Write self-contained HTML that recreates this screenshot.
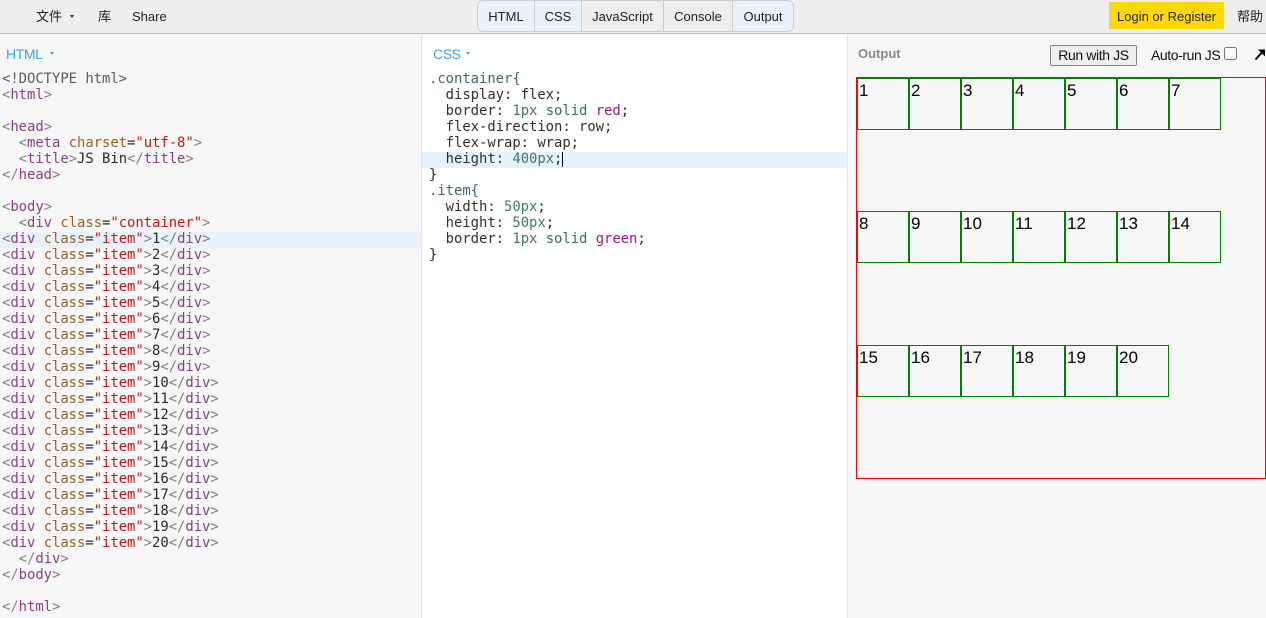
<!DOCTYPE html>
<html>
<head>
<meta charset="utf-8">
<style>
html,body{margin:0;padding:0;width:1266px;height:618px;overflow:hidden;background:#fff;font-family:"Liberation Sans","Noto Sans CJK SC",sans-serif;}
.abs{position:absolute;white-space:nowrap;}
#top{position:absolute;left:0;top:0;width:1266px;height:33px;background:#eee;border-bottom:1px solid #bfbfbf;}
.m{position:absolute;top:9px;font-size:13px;line-height:16px;color:#222;white-space:nowrap;}
#tabs{position:absolute;left:477px;top:0;width:315px;height:30px;border:1px solid #c5cfd8;border-radius:6px;overflow:hidden;display:flex;font-size:13px;line-height:32px;color:#222;}
#tabs div{text-align:center;border-right:1px solid #ccc;background:#eee;box-sizing:border-box;height:30px;}
#tabs div.on{background:#e9f1fb;}
#tabs div:last-child{border-right:0;}
#login{position:absolute;left:1109px;top:2px;width:115px;height:27px;background:#ffd900;color:#222;font-size:13px;line-height:29px;text-align:center;}
.panel{position:absolute;top:34px;height:584px;}
#p1{left:0;width:421px;background:#f7f7f7;border-right:1px solid #e4e4e4;}
#p2{left:422px;width:425px;background:#fff;border-right:1px solid #e4e4e4;}
#p3{left:848px;width:418px;background:#f7f7f7;}
.lab{position:absolute;top:12px;font-size:14px;line-height:16px;color:#3ba3ea;letter-spacing:-.4px;}
.car{position:absolute;width:0;height:0;border-left:2.5px solid transparent;border-right:2.5px solid transparent;border-top:3px solid #3ba3ea;}
pre{position:absolute;margin:0;font-family:"DejaVu Sans Mono","Liberation Mono",monospace;font-size:13.9px;line-height:16px;color:#2a2a2a;letter-spacing:-.03px;}
.hl{position:absolute;height:16px;background:#e8f2fc;}
.t{color:#8c3f86}.a{color:#a0601f}.s{color:#c41a16}.p{color:#808080}.n{color:#3f7a66}.k{color:#3a6c72}.r{color:#96189a}.d{color:#5c5c5c}.c{color:#33302c}.o{color:#3a6c72}
#cont{position:absolute;left:856px;top:77px;width:408px;height:400px;border:1px solid red;display:flex;flex-direction:row;flex-wrap:wrap;font-size:17px;line-height:23px;color:#000;}
#cont div{width:49px;height:50px;border:1px solid green;padding-left:1px;}
#run{position:absolute;left:1050px;top:45px;width:87px;height:21px;box-sizing:border-box;border:1px solid #8f8080;border-radius:2px;background:#efefef;font-size:14px;line-height:19px;text-align:center;color:#111;letter-spacing:-.38px;}
#cb{position:absolute;left:1224px;top:47px;width:13px;height:13px;box-sizing:border-box;border:1px solid #767676;border-radius:2.5px;background:#fff;}
</style>
</head>
<body>
<div id="top">
  <div class="m" style="left:36px">文件</div>
  <div class="car" style="left:70px;top:15px;border-top-color:#222"></div>
  <div class="m" style="left:98px">库</div>
  <div class="m" style="left:132px">Share</div>
  <div id="tabs">
    <div class="on" style="width:57px">HTML</div>
    <div class="on" style="width:47px">CSS</div>
    <div style="width:82px">JavaScript</div>
    <div style="width:69px">Console</div>
    <div class="on" style="width:60px">Output</div>
  </div>
  <div id="login">Login or Register</div>
  <div class="m" style="left:1237px">帮助</div>
</div>

<div class="panel" id="p1"><div class="lab" style="left:6px">HTML</div><div class="car" style="left:50px;top:18px"></div></div>
<div class="panel" id="p2"><div class="lab" style="left:11px">CSS</div><div class="car" style="left:44px;top:18px"></div></div>
<div class="panel" id="p3"><div class="lab" style="left:10px;color:#8a8a8a;font-weight:bold;font-size:13px;letter-spacing:0">Output</div></div>

<div class="hl" style="left:0;top:232px;width:421px"></div>
<div class="hl" style="left:422px;top:152px;width:425px"></div>

<pre style="left:2px;top:71px"><span class="d">&lt;!DOCTYPE html&gt;</span>
<span class="p">&lt;</span><span class="t">html</span><span class="p">&gt;</span>

<span class="p">&lt;</span><span class="t">head</span><span class="p">&gt;</span>
  <span class="p">&lt;</span><span class="t">meta</span> <span class="a">charset</span>=<span class="s">"utf-8"</span><span class="p">&gt;</span>
  <span class="p">&lt;</span><span class="t">title</span><span class="p">&gt;</span>JS Bin<span class="p">&lt;/</span><span class="t">title</span><span class="p">&gt;</span>
<span class="p">&lt;/</span><span class="t">head</span><span class="p">&gt;</span>

<span class="p">&lt;</span><span class="t">body</span><span class="p">&gt;</span>
  <span class="p">&lt;</span><span class="t">div</span> <span class="a">class</span>=<span class="s">"container"</span><span class="p">&gt;</span>
<span class="p">&lt;</span><span class="t">div</span> <span class="a">class</span>=<span class="s">"item"</span><span class="p">&gt;</span>1<span class="p">&lt;/</span><span class="t">div</span><span class="p">&gt;</span>
<span class="p">&lt;</span><span class="t">div</span> <span class="a">class</span>=<span class="s">"item"</span><span class="p">&gt;</span>2<span class="p">&lt;/</span><span class="t">div</span><span class="p">&gt;</span>
<span class="p">&lt;</span><span class="t">div</span> <span class="a">class</span>=<span class="s">"item"</span><span class="p">&gt;</span>3<span class="p">&lt;/</span><span class="t">div</span><span class="p">&gt;</span>
<span class="p">&lt;</span><span class="t">div</span> <span class="a">class</span>=<span class="s">"item"</span><span class="p">&gt;</span>4<span class="p">&lt;/</span><span class="t">div</span><span class="p">&gt;</span>
<span class="p">&lt;</span><span class="t">div</span> <span class="a">class</span>=<span class="s">"item"</span><span class="p">&gt;</span>5<span class="p">&lt;/</span><span class="t">div</span><span class="p">&gt;</span>
<span class="p">&lt;</span><span class="t">div</span> <span class="a">class</span>=<span class="s">"item"</span><span class="p">&gt;</span>6<span class="p">&lt;/</span><span class="t">div</span><span class="p">&gt;</span>
<span class="p">&lt;</span><span class="t">div</span> <span class="a">class</span>=<span class="s">"item"</span><span class="p">&gt;</span>7<span class="p">&lt;/</span><span class="t">div</span><span class="p">&gt;</span>
<span class="p">&lt;</span><span class="t">div</span> <span class="a">class</span>=<span class="s">"item"</span><span class="p">&gt;</span>8<span class="p">&lt;/</span><span class="t">div</span><span class="p">&gt;</span>
<span class="p">&lt;</span><span class="t">div</span> <span class="a">class</span>=<span class="s">"item"</span><span class="p">&gt;</span>9<span class="p">&lt;/</span><span class="t">div</span><span class="p">&gt;</span>
<span class="p">&lt;</span><span class="t">div</span> <span class="a">class</span>=<span class="s">"item"</span><span class="p">&gt;</span>10<span class="p">&lt;/</span><span class="t">div</span><span class="p">&gt;</span>
<span class="p">&lt;</span><span class="t">div</span> <span class="a">class</span>=<span class="s">"item"</span><span class="p">&gt;</span>11<span class="p">&lt;/</span><span class="t">div</span><span class="p">&gt;</span>
<span class="p">&lt;</span><span class="t">div</span> <span class="a">class</span>=<span class="s">"item"</span><span class="p">&gt;</span>12<span class="p">&lt;/</span><span class="t">div</span><span class="p">&gt;</span>
<span class="p">&lt;</span><span class="t">div</span> <span class="a">class</span>=<span class="s">"item"</span><span class="p">&gt;</span>13<span class="p">&lt;/</span><span class="t">div</span><span class="p">&gt;</span>
<span class="p">&lt;</span><span class="t">div</span> <span class="a">class</span>=<span class="s">"item"</span><span class="p">&gt;</span>14<span class="p">&lt;/</span><span class="t">div</span><span class="p">&gt;</span>
<span class="p">&lt;</span><span class="t">div</span> <span class="a">class</span>=<span class="s">"item"</span><span class="p">&gt;</span>15<span class="p">&lt;/</span><span class="t">div</span><span class="p">&gt;</span>
<span class="p">&lt;</span><span class="t">div</span> <span class="a">class</span>=<span class="s">"item"</span><span class="p">&gt;</span>16<span class="p">&lt;/</span><span class="t">div</span><span class="p">&gt;</span>
<span class="p">&lt;</span><span class="t">div</span> <span class="a">class</span>=<span class="s">"item"</span><span class="p">&gt;</span>17<span class="p">&lt;/</span><span class="t">div</span><span class="p">&gt;</span>
<span class="p">&lt;</span><span class="t">div</span> <span class="a">class</span>=<span class="s">"item"</span><span class="p">&gt;</span>18<span class="p">&lt;/</span><span class="t">div</span><span class="p">&gt;</span>
<span class="p">&lt;</span><span class="t">div</span> <span class="a">class</span>=<span class="s">"item"</span><span class="p">&gt;</span>19<span class="p">&lt;/</span><span class="t">div</span><span class="p">&gt;</span>
<span class="p">&lt;</span><span class="t">div</span> <span class="a">class</span>=<span class="s">"item"</span><span class="p">&gt;</span>20<span class="p">&lt;/</span><span class="t">div</span><span class="p">&gt;</span>
  <span class="p">&lt;/</span><span class="t">div</span><span class="p">&gt;</span>
<span class="p">&lt;/</span><span class="t">body</span><span class="p">&gt;</span>

<span class="p">&lt;/</span><span class="t">html</span><span class="p">&gt;</span></pre>

<pre style="left:429px;top:71px"><span class="k">.container{</span>
  <span class="c">display: flex;</span>
  <span class="c">border:</span> <span class="n">1px</span> <span class="k">solid</span> <span class="r">red</span>;
  <span class="c">flex-direction: row;</span>
  <span class="c">flex-wrap: wrap;</span>
  <span class="c">height:</span> <span class="n">400px</span>;
}
<span class="k">.item{</span>
  <span class="c">width:</span> <span class="n">50px</span>;
  <span class="c">height:</span> <span class="n">50px</span>;
  <span class="c">border:</span> <span class="n">1px</span> <span class="k">solid</span> <span class="r">green</span>;
}</pre>
<div class="abs" style="left:562px;top:152px;width:1px;height:15px;background:#000"></div>

<div id="run">Run with JS</div>
<div class="abs" style="left:1151px;top:47px;font-size:14px;line-height:17px;color:#111;letter-spacing:-.42px">Auto-run JS</div>
<div id="cb"></div>
<svg class="abs" style="left:1252px;top:46px" width="14" height="16" viewBox="0 0 14 16"><path d="M3.5 13.5L9.5 7" fill="none" stroke="#000" stroke-width="2"/><path d="M6 3.5L13 3.5L13 10.5Z" fill="#000"/></svg>

<div id="cont">
<div>1</div><div>2</div><div>3</div><div>4</div><div>5</div><div>6</div><div>7</div>
<div>8</div><div>9</div><div>10</div><div>11</div><div>12</div><div>13</div><div>14</div>
<div>15</div><div>16</div><div>17</div><div>18</div><div>19</div><div>20</div>
</div>
</body>
</html>
